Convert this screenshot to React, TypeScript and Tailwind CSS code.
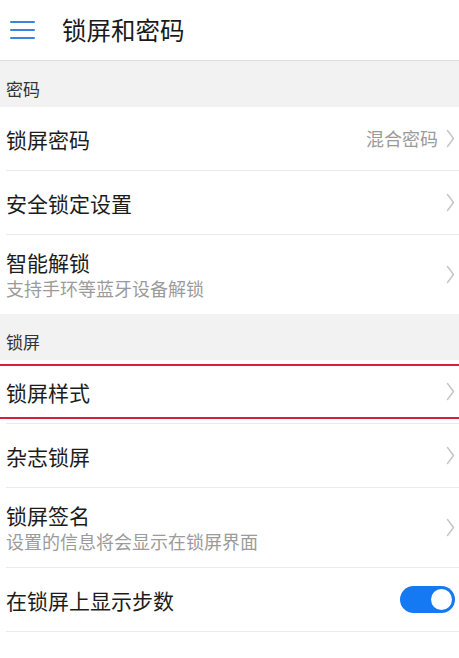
import React from "react";

const Chevron = () => (
  <svg width="9" height="19" viewBox="0 0 9 19" className="shrink-0">
    <path d="M1.5 1.5 L7.5 9.5 L1.5 17.5" fill="none" stroke="#c4c4c4" strokeWidth="1.4" strokeLinecap="round" strokeLinejoin="round" />
  </svg>
);

const Divider = () => <div className="ml-[6px] h-px bg-[#e9e9e9] rounded-full" />;

const Section = ({ label }: { label: string }) => (
  <div className="h-[46px] bg-[#f2f2f2] pl-[6px] pt-[19px] text-[17px] leading-[18px] text-[#333]">{label}</div>
);

const Row = ({
  title,
  sub,
  right,
  toggle,
  divider = true,
}: {
  title: string;
  sub?: string;
  right?: string;
  toggle?: boolean;
  divider?: boolean;
}) => (
  <div>
    <div className={`flex items-center pl-[6px] pr-[4px] ${sub ? "h-[79px]" : "h-[63px]"}`}>
      <div className="flex-1 min-w-0">
        <div className="text-[21px] leading-[26px] text-[#1c1c1c]">{title}</div>
        {sub && <div className="text-[18px] leading-[24px] text-[#9b9b9b] mt-[1px]">{sub}</div>}
      </div>
      {right && <div className="text-[18px] text-[#9b9b9b] mr-[8px]">{right}</div>}
      {toggle ? (
        <div className="w-[55px] h-[27px] rounded-full bg-[#1479f2] flex items-center justify-end pr-[3px]">
          <div className="w-[21px] h-[21px] rounded-full bg-white" />
        </div>
      ) : (
        <Chevron />
      )}
    </div>
    {divider && <Divider />}
  </div>
);

export default function App() {
  return (
    <div
      className="relative w-[459px] h-[658px] bg-white overflow-hidden"
      style={{ fontFamily: '"Noto Sans CJK SC", "Noto Sans", sans-serif' }}
    >
      <div className="h-[60px] flex items-center bg-white">
        <div className="w-[62px] pl-[10px]">
          <div className="flex flex-col gap-[5.5px] w-[25px]">
            <div className="h-[2.5px] bg-[#3d82dc] rounded" />
            <div className="h-[2.5px] bg-[#3d82dc] rounded" />
            <div className="h-[2.5px] bg-[#3d82dc] rounded" />
          </div>
        </div>
        <div className="text-[24.5px] text-[#1a1a1a] leading-none">锁屏和密码</div>
      </div>
      <div className="h-px bg-[#dcdcdc]" />
      <Section label="密码" />
      <Row title="锁屏密码" right="混合密码" />
      <Row title="安全锁定设置" />
      <Row title="智能解锁" sub="支持手环等蓝牙设备解锁" divider={false} />
      <Section label="锁屏" />
      <Row title="锁屏样式" />
      <Row title="杂志锁屏" />
      <Row title="锁屏签名" sub="设置的信息将会显示在锁屏界面" />
      <Row title="在锁屏上显示步数" toggle />

      <div className="absolute left-0 right-0 top-[364px] h-[55px] border-y-2 border-[#d2203e] pointer-events-none" />
    </div>
  );
}
